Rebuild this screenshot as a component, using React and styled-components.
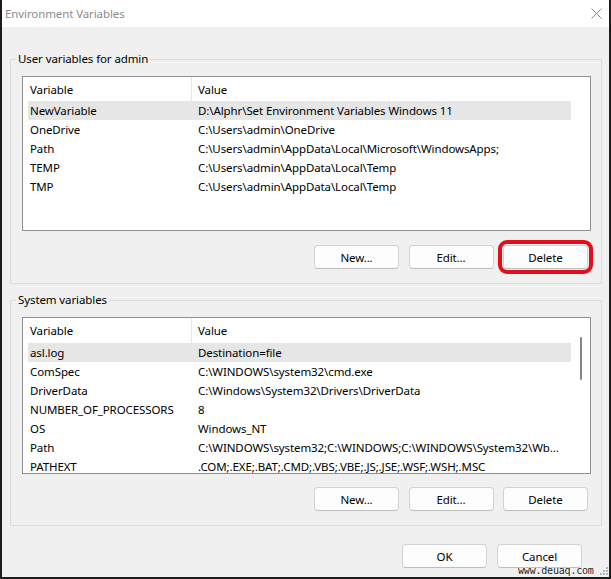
import React from "react";
import styled, { createGlobalStyle } from "styled-components";

const FONT = `"Noto Sans", "Open Sans", sans-serif`;
const SIZE = "11.5px";

const GlobalStyle = createGlobalStyle`
  body {
    margin: 0;
    background: #ffffff;
    font-family: ${FONT};
    font-size: ${SIZE};
    letter-spacing: -0.1px;
    color: #000;
  }
`;

const Dialog = styled.div`
  position: relative;
  width: 611px;
  height: 579px;
  box-sizing: border-box;
  border: 2px solid #1c1c1c;
  border-top: none;
  display: flex;
  flex-direction: column;
  background: #f0f0f0;
`;

const TitleBar = styled.div`
  height: 27px;
  flex-shrink: 0;
  background: #ffffff;
  display: flex;
  align-items: center;
  justify-content: space-between;
  padding: 0 7px 0 3px;
`;

const Title = styled.span`
  color: #8c8c8c;
  font-size: ${SIZE};
`;

const Body = styled.div`
  flex: 1;
  display: flex;
  flex-direction: column;
  padding: 24px 7px 0 8px;
`;

const Group = styled.fieldset`
  margin: ${(p) => (p.$first ? "0" : "8px 0 0 0")};
  padding: ${(p) => (p.$first ? "9px" : "9px")} 10px 14px 11px;
  border: 1px solid #dcdcdc;
  min-width: 0;
`;

const Legend = styled.legend`
  margin-left: -6px;
  padding: 0 2px;
  line-height: 16px;
  font-size: ${SIZE};
`;

const List = styled.div`
  height: ${(p) => p.$height}px;
  box-sizing: border-box;
  border: 1px solid #8f8f8f;
  background: #ffffff;
  display: flex;
  overflow: hidden;
`;

const Table = styled.div`
  flex: 1;
  min-width: 0;
  padding-left: 5px;
`;

const HeaderRow = styled.div`
  display: flex;
  height: ${(p) => p.$height}px;
  align-items: stretch;
`;

const HeaderCell = styled.div`
  display: flex;
  align-items: center;
  box-sizing: border-box;
  ${(p) =>
    p.$name
      ? `width: 164px; flex-shrink: 0; padding-left: 2px; border-right: 1px solid #e5e5e5;`
      : `flex: 1; padding-left: 6px;`}
`;

const Row = styled.div`
  display: flex;
  height: 19px;
  align-items: center;
  background: ${(p) => (p.$selected ? "#e6e6e6" : "transparent")};
`;

const NameCell = styled.div`
  width: 163px;
  flex-shrink: 0;
  box-sizing: border-box;
  padding-left: 2px;
  white-space: nowrap;
`;

const ValueCell = styled.div`
  flex: 1;
  padding-left: 7px;
  white-space: nowrap;
  overflow: hidden;
`;

const ScrollTrack = styled.div`
  width: 19px;
  flex-shrink: 0;
  display: flex;
  justify-content: center;
`;

const Thumb = styled.div`
  margin-top: 19px;
  width: 2px;
  height: 43px;
  border-radius: 1px;
  background: #858585;
`;

const ButtonRow = styled.div`
  display: flex;
  justify-content: flex-end;
  gap: ${(p) => p.$gap || 9.5}px;
  margin-top: ${(p) => p.$top || 14}px;
  padding-right: ${(p) => p.$right || 3}px;
`;

const Button = styled.button`
  width: 85px;
  height: 24px;
  box-sizing: border-box;
  background: #fdfdfd;
  border: 1px solid #d2d2d2;
  border-bottom-color: #bdbdbd;
  border-radius: 4px;
  font-family: ${FONT};
  font-size: ${SIZE};
  letter-spacing: -0.1px;
  color: #000;
  padding: 0;
  outline: ${(p) => (p.$highlight ? "4px solid #e0101b" : "none")};
  outline-offset: 1px;
`;

const Watermark = styled.div`
  position: absolute;
  left: 516px;
  bottom: 1px;
  font-family: "DejaVu Sans Mono", monospace;
  font-size: 10px;
  letter-spacing: -0.2px;
  color: #1a1a1a;
  text-shadow: 0 0 2px #fff, 0 0 2px #fff;
`;

const Grip = styled.svg`
  position: absolute;
  right: 1px;
  bottom: 2px;
`;

const userVars = [
  ["NewVariable", "D:\\Alphr\\Set Environment Variables Windows 11"],
  ["OneDrive", "C:\\Users\\admin\\OneDrive"],
  ["Path", "C:\\Users\\admin\\AppData\\Local\\Microsoft\\WindowsApps;"],
  ["TEMP", "C:\\Users\\admin\\AppData\\Local\\Temp"],
  ["TMP", "C:\\Users\\admin\\AppData\\Local\\Temp"],
];

const systemVars = [
  ["asl.log", "Destination=file"],
  ["ComSpec", "C:\\WINDOWS\\system32\\cmd.exe"],
  ["DriverData", "C:\\Windows\\System32\\Drivers\\DriverData"],
  ["NUMBER_OF_PROCESSORS", "8"],
  ["OS", "Windows_NT"],
  ["Path", "C:\\WINDOWS\\system32;C:\\WINDOWS;C:\\WINDOWS\\System32\\Wb..."],
  ["PATHEXT", ".COM;.EXE;.BAT;.CMD;.VBS;.VBE;.JS;.JSE;.WSF;.WSH;.MSC"],
];

function VarList({ rows, height, header, scroll }) {
  return (
    <List $height={height}>
      <Table>
        <HeaderRow $height={header}>
          <HeaderCell $name>Variable</HeaderCell>
          <HeaderCell>Value</HeaderCell>
        </HeaderRow>
        {rows.map(([name, value], i) => (
          <Row key={name + i} $selected={i === 0}>
            <NameCell>{name}</NameCell>
            <ValueCell>{value}</ValueCell>
          </Row>
        ))}
      </Table>
      <ScrollTrack>{scroll && <Thumb />}</ScrollTrack>
    </List>
  );
}

export default function App() {
  return (
    <>
      <GlobalStyle />
      <Dialog>
        <TitleBar>
          <Title>Environment Variables</Title>
          <svg width="11" height="11" viewBox="0 0 11 11">
            <path d="M0.5 0.5 L10.5 10.5 M10.5 0.5 L0.5 10.5" stroke="#8a8a8a" strokeWidth="1" />
          </svg>
        </TitleBar>
        <Body>
          <Group $first>
            <Legend>User variables for admin</Legend>
            <VarList rows={userVars} height={155} header={24} />
            <ButtonRow>
              <Button>New...</Button>
              <Button>Edit...</Button>
              <Button $highlight>Delete</Button>
            </ButtonRow>
          </Group>
          <Group>
            <Legend>System variables</Legend>
            <VarList rows={systemVars} height={157} header={25} scroll />
            <ButtonRow $top={13}>
              <Button>New...</Button>
              <Button>Edit...</Button>
              <Button>Delete</Button>
            </ButtonRow>
          </Group>
          <ButtonRow $top={18} $gap={10} $right={20}>
            <Button>OK</Button>
            <Button>Cancel</Button>
          </ButtonRow>
        </Body>
        <Watermark>www.deuaq.com</Watermark>
        <Grip width="8" height="8" viewBox="0 0 8 8">
          {[
            [6, 0],
            [6, 3],
            [3, 3],
            [6, 6],
            [3, 6],
            [0, 6],
          ].map(([x, y]) => (
            <rect key={x + "-" + y} x={x} y={y} width="2" height="2" fill="#b5b5b5" />
          ))}
        </Grip>
      </Dialog>
    </>
  );
}
